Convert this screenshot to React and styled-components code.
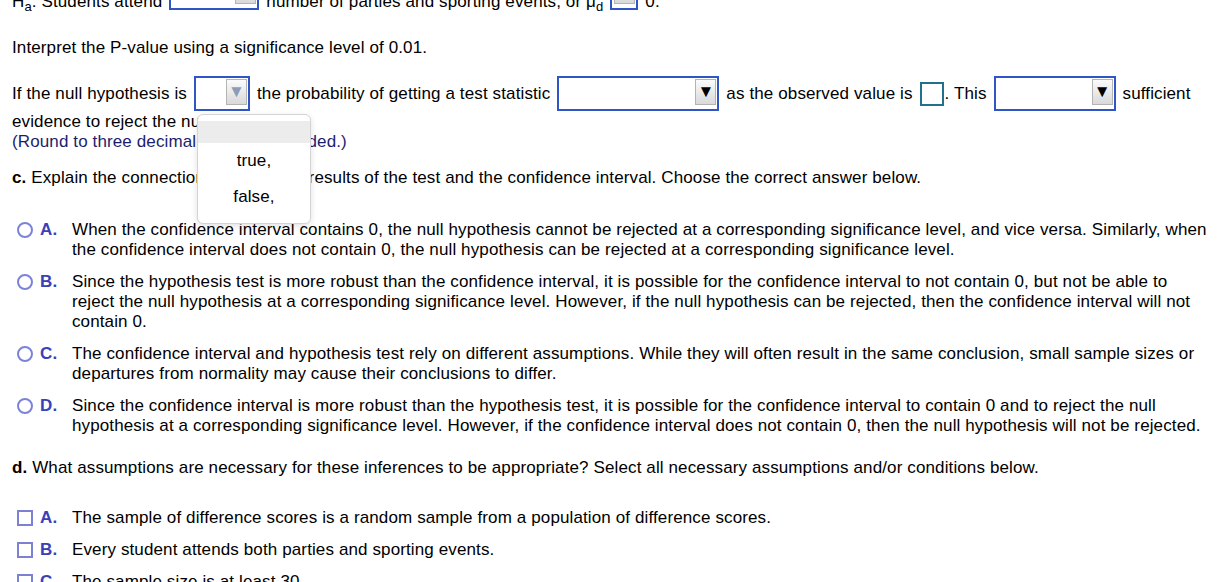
import styled, { createGlobalStyle } from "styled-components"

const GlobalStyle = createGlobalStyle`
    html, body {
        margin: 0;
        background: #fff;
    }
    body {
        font-family: "Liberation Sans", Arial, sans-serif;
        font-size: 17px;
        letter-spacing: 0.12px;
        color: #000;
        overflow: hidden;
    }
`

const Page = styled.div`
    margin-top: -25px;
    padding: 0 4px 0 12px;
`

const TopRow = styled.div`
    display: flex;
    align-items: flex-end;
    height: 37px;
    white-space: nowrap;
    line-height: 20px;
`

const Row = styled.div`
    display: flex;
    align-items: center;
    height: 35px;
    margin-top: 18px;
    white-space: nowrap;
    line-height: 20px;
`

const Line = styled.p`
    margin: ${props => props.$mt || 0}px 0 0;
    line-height: 20px;
    white-space: nowrap;
    color: ${props => props.$note ? '#1d1d6e' : '#000'};
`

const Sub = styled.sub`
    font-size: 13px;
    vertical-align: -4px;
    line-height: 0;
`

const SelectBox = styled.span`
    position: relative;
    display: inline-flex;
    justify-content: flex-end;
    align-items: flex-start;
    box-sizing: border-box;
    width: ${props => props.$w}px;
    height: 35px;
    margin: 0 7px ${props => props.$mb || 0}px;
    padding: 1px 1px 0 0;
    border: 2px solid #2f55c6;
    background: #fff;
`

const ArrowButton = styled.span`
    display: flex;
    align-items: center;
    justify-content: center;
    box-sizing: border-box;
    width: 21px;
    height: 26px;
    border: 1px solid #b4b4b4;
    background: linear-gradient(#fbfbfb, #d9d9d9);
    color: ${props => props.$dim ? '#8c9bb8' : '#000'};
    font-size: 17px;
    letter-spacing: 0;
`

const Menu = styled.div`
    position: absolute;
    top: 36px;
    left: 1px;
    width: 114px;
    box-sizing: border-box;
    padding: 6px 0 8px;
    border: 1px solid #d4d4d4;
    border-radius: 6px;
    background: #fff;
    box-shadow: 0 2px 6px rgba(0, 0, 0, 0.12);
    z-index: 5;
`

const MenuBlank = styled.div`
    height: 22px;
    background: #ececec;
`

const MenuItem = styled.div`
    height: 36px;
    line-height: 36px;
    text-align: center;
`

const SmallBox = styled.span`
    display: inline-block;
    box-sizing: border-box;
    width: 24px;
    height: 24px;
    margin: 0 1px 0 7px;
    border: 2px solid #23708c;
`

const Bold = styled.b`
    font-weight: bold;
`

const List = styled.div`
    display: flex;
    flex-direction: column;
    gap: 12px;
    margin-top: ${props => props.$mt}px;
`

const Choice = styled.div`
    display: grid;
    grid-template-columns: 16px 25px 1fr;
    column-gap: 7px;
    padding-left: 5px;
    line-height: 20px;
    white-space: nowrap;
`

const Radio = styled.span`
    box-sizing: border-box;
    width: 16px;
    height: 16px;
    margin-top: 2px;
    border: 2px solid #7b83d8;
    border-radius: 50%;
`

const Check = styled.span`
    box-sizing: border-box;
    width: 16px;
    height: 16px;
    margin-top: 2px;
    border: 2px solid #7b81d4;
`

const Letter = styled.span`
    font-weight: bold;
    color: #3a40b6;
`

const Select = ({ width, dim, mb, children }) => (
    <SelectBox $w={width} $mb={mb}>
        <ArrowButton $dim={dim}>▼</ArrowButton>
        {children}
    </SelectBox>
)

const explainOptions = [
    { letter: 'A.', lines: [
        'When the confidence interval contains 0, the null hypothesis cannot be rejected at a corresponding significance level, and vice versa. Similarly, when',
        'the confidence interval does not contain 0, the null hypothesis can be rejected at a corresponding significance level.',
    ] },
    { letter: 'B.', lines: [
        'Since the hypothesis test is more robust than the confidence interval, it is possible for the confidence interval to not contain 0, but not be able to',
        'reject the null hypothesis at a corresponding significance level. However, if the null hypothesis can be rejected, then the confidence interval will not',
        'contain 0.',
    ] },
    { letter: 'C.', lines: [
        'The confidence interval and hypothesis test rely on different assumptions. While they will often result in the same conclusion, small sample sizes or',
        'departures from normality may cause their conclusions to differ.',
    ] },
    { letter: 'D.', lines: [
        'Since the confidence interval is more robust than the hypothesis test, it is possible for the confidence interval to contain 0 and to reject the null',
        'hypothesis at a corresponding significance level. However, if the confidence interval does not contain 0, then the null hypothesis will not be rejected.',
    ] },
]

const assumptions = [
    { letter: 'A.', text: 'The sample of difference scores is a random sample from a population of difference scores.' },
    { letter: 'B.', text: 'Every student attends both parties and sporting events.' },
    { letter: 'C.', text: 'The sample size is at least 30.' },
]

const App = () => {
    return (
        <>
            <GlobalStyle />
            <Page>
                <TopRow>
                    <span>H<Sub>a</Sub>: Students attend</span>
                    <Select width={90} mb={2} />
                    <span>number of parties and sporting events, or μ<Sub>d</Sub></span>
                    <Select width={28} mb={2} />
                    <span>0.</span>
                </TopRow>

                <Line $mt={26}>Interpret the P-value using a significance level of 0.01.</Line>

                <Row>
                    <span>If the null hypothesis is</span>
                    <Select width={56} dim>
                        <Menu>
                            <MenuBlank />
                            <MenuItem>true,</MenuItem>
                            <MenuItem>false,</MenuItem>
                        </Menu>
                    </Select>
                    <span>the probability of getting a test statistic</span>
                    <Select width={162} />
                    <span>as the observed value is</span>
                    <SmallBox />
                    <span>. This</span>
                    <Select width={122} />
                    <span>sufficient</span>
                </Row>
                <Line $mt={1}>evidence to reject the null hypothesis.</Line>
                <Line $note>(Round to three decimal places as needed.)</Line>

                <Line $mt={16}><Bold>c.</Bold> Explain the connection between the results of the test and the confidence interval. Choose the correct answer below.</Line>

                <List $mt={32}>
                    {explainOptions.map((o) => (
                        <Choice key={o.letter}>
                            <Radio />
                            <Letter>{o.letter}</Letter>
                            <span>
                                {o.lines.map((l, i) => (
                                    <span key={i}>{l}{i < o.lines.length - 1 && <br />}</span>
                                ))}
                            </span>
                        </Choice>
                    ))}
                </List>

                <Line $mt={22}><Bold>d.</Bold> What assumptions are necessary for these inferences to be appropriate? Select all necessary assumptions and/or conditions below.</Line>

                <List $mt={30}>
                    {assumptions.map((a) => (
                        <Choice key={a.letter}>
                            <Check />
                            <Letter>{a.letter}</Letter>
                            <span>{a.text}</span>
                        </Choice>
                    ))}
                </List>
            </Page>
        </>
    )
}

export default App
